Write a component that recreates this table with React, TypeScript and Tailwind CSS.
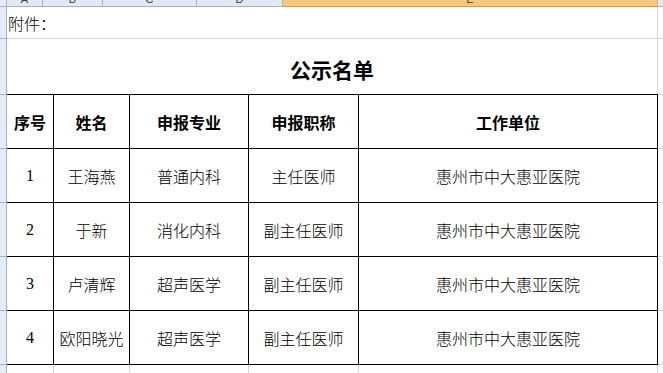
import React from "react";

const CJK = { fontFamily: '"Noto Sans CJK SC", "Noto Sans", sans-serif' };
const NUM = { fontFamily: '"Liberation Serif", "Noto Sans CJK SC", serif' };

const rows = [
  ["1", "王海燕", "普通内科", "主任医师", "惠州市中大惠亚医院"],
  ["2", "于新", "消化内科", "副主任医师", "惠州市中大惠亚医院"],
  ["3", "卢清辉", "超声医学", "副主任医师", "惠州市中大惠亚医院"],
  ["4", "欧阳晓光", "超声医学", "副主任医师", "惠州市中大惠亚医院"],
];

const colW = ["w-[47px]", "w-[76px]", "w-[119px]", "w-[110px]", "w-[299px]"];

export default function App() {
  return (
    <div className="w-[663px] h-[373px] overflow-hidden bg-white text-black" style={CJK}>
      {/* column header strip */}
      <div className="flex h-[7px]">
        <div className="w-[7px] h-[7px] bg-[#e4ecf7] border-r border-b border-[#9eb6ce]" />
        {[
          ["A", "w-[36px]", false],
          ["B", "w-[60px]", false],
          ["C", "w-[94px]", false],
          ["D", "w-[86px]", false],
          ["E", "w-[375px]", true],
        ].map(([l, w, sel]) => (
          <div
            key={l as string}
            className={`${w} h-[7px] overflow-hidden flex justify-center border-r ${
              sel
                ? "bg-[#f6c97c] border-b border-b-[#f29436] border-r-[#f0a848]"
                : "bg-[#e1e9f4] border-b border-b-[#9eb6ce] border-r-[#9eb6ce]"
            }`}
          >
            <span className="text-[11px] leading-[11px] -mt-[6px] text-[#3a3a3a]" style={{ fontFamily: '"Liberation Sans", sans-serif' }}>
              {l}
            </span>
          </div>
        ))}
        <div className="flex-1 h-[7px] bg-[#e1e9f4] border-b border-[#9eb6ce]" />
      </div>

      <div className="flex">
        {/* row header strip */}
        <div className="w-[7px] flex flex-col bg-[#e4ecf7] border-r border-[#9eb6ce]">
          <div className="h-[32px] border-b border-[#9eb6ce]" />
          <div className="h-[56px] border-b border-[#9eb6ce]" />
          <div className="h-[54px] border-b border-[#9eb6ce]" />
          <div className="h-[54px] border-b border-[#9eb6ce]" />
          <div className="h-[54px] border-b border-[#9eb6ce]" />
          <div className="h-[54px] border-b border-[#9eb6ce]" />
          <div className="h-[54px] border-b border-[#9eb6ce]" />
          <div className="h-[20px]" />
        </div>

        {/* sheet body */}
        <div className="w-[651px] flex flex-col">
          <div className="h-[32px] flex items-center pl-[1px] border-b border-r border-[#d0d7e5] text-[16px] font-light leading-none">
            附件：
          </div>
          <div className="h-[55px] flex items-center justify-center pt-[6px] border-r border-[#d0d7e5] text-[21px] font-bold leading-none">
            公示名单
          </div>
          <div className="flex flex-col border-t border-black">
            <div className="flex h-[54px]">
              {["序号", "姓名", "申报专业", "申报职称", "工作单位"].map((h, i) => (
                <div
                  key={h}
                  className={`${colW[i]} flex items-center justify-center border-r border-b border-black text-[16px] font-bold leading-none`}
                >
                  {h}
                </div>
              ))}
            </div>
            {rows.map((r) => (
              <div key={r[0]} className="flex h-[54px]">
                {r.map((c, i) => (
                  <div
                    key={i}
                    className={`${colW[i]} flex items-center justify-center border-r border-b border-black text-[16px] font-light leading-none`}
                    style={i === 0 ? NUM : undefined}
                  >
                    {c}
                  </div>
                ))}
              </div>
            ))}
            <div className="flex h-[20px]">
              {colW.map((w, i) => (
                <div key={i} className={`${w} border-r border-[#d0d7e5]`} />
              ))}
            </div>
          </div>
        </div>

        {/* next column */}
        <div className="flex-1 flex flex-col">
          <div className="h-[32px] border-b border-[#d0d7e5]" />
          <div className="h-[56px] border-b border-[#d0d7e5]" />
          <div className="h-[54px] border-b border-[#d0d7e5]" />
          <div className="h-[54px] border-b border-[#d0d7e5]" />
          <div className="h-[54px] border-b border-[#d0d7e5]" />
          <div className="h-[54px] border-b border-[#d0d7e5]" />
          <div className="h-[54px] border-b border-[#d0d7e5]" />
        </div>
      </div>
    </div>
  );
}
